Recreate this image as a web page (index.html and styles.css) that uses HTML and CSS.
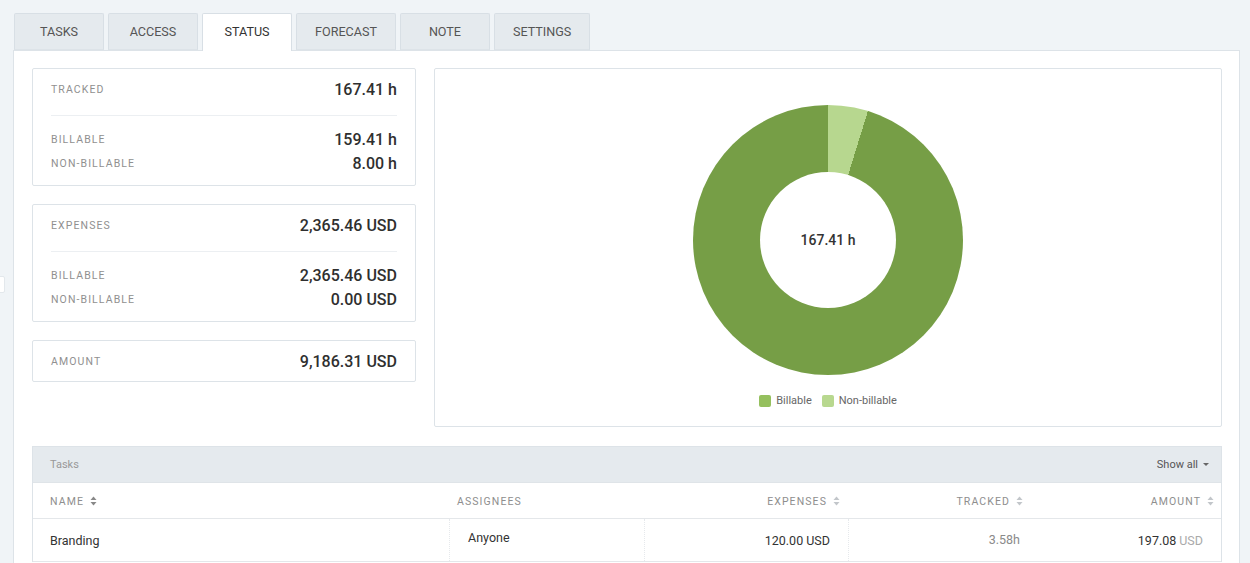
FILE: index.html
```html
<!DOCTYPE html>
<html>
<head>
<meta charset="utf-8">
<link rel="stylesheet" href="styles.css">
</head>
<body>
<div class="edge-tab"></div>
<nav class="tabs">
  <div class="tab">TASKS</div>
  <div class="tab">ACCESS</div>
  <div class="tab active">STATUS</div>
  <div class="tab">FORECAST</div>
  <div class="tab">NOTE</div>
  <div class="tab">SETTINGS</div>
</nav>
<main class="panel">
  <section class="top">
    <div class="stats">
      <div class="card">
        <div class="row head"><span class="label">TRACKED</span><span class="value">167.41 h</span></div>
        <div class="divider"></div>
        <div class="row"><span class="label">BILLABLE</span><span class="value">159.41 h</span></div>
        <div class="row"><span class="label">NON-BILLABLE</span><span class="value">8.00 h</span></div>
      </div>
      <div class="card">
        <div class="row head"><span class="label">EXPENSES</span><span class="value">2,365.46 USD</span></div>
        <div class="divider"></div>
        <div class="row"><span class="label">BILLABLE</span><span class="value">2,365.46 USD</span></div>
        <div class="row"><span class="label">NON-BILLABLE</span><span class="value">0.00 USD</span></div>
      </div>
      <div class="card single">
        <div class="row head"><span class="label">AMOUNT</span><span class="value">9,186.31 USD</span></div>
      </div>
    </div>
    <div class="chart-card">
      <div class="donut" style="background: conic-gradient(#b7d78f 0deg 17.2deg, #769e46 17.2deg 360deg);">
        <div class="donut-hole">167.41 h</div>
      </div>
      <div class="legend">
        <span class="legend-item"><span class="sw sw-bill"></span>Billable</span>
        <span class="legend-item"><span class="sw sw-non"></span>Non-billable</span>
      </div>
    </div>
  </section>

  <section class="table">
    <div class="table-bar">
      <span class="bar-title">Tasks</span>
      <span class="show-all">Show all <span class="caret"></span></span>
    </div>
    <div class="grid thead">
      <div class="th c-name">NAME <svg class="sort dark" viewBox="0 0 7 10" width="7" height="10"><path d="M3.5 0.5L6.5 4H0.5Z"/><path d="M3.5 9.5L6.5 6H0.5Z"/></svg></div>
      <div class="th c-assign">ASSIGNEES</div>
      <div class="th c-exp">EXPENSES <svg class="sort" viewBox="0 0 7 10" width="7" height="10"><path d="M3.5 0.5L6.5 4H0.5Z"/><path d="M3.5 9.5L6.5 6H0.5Z"/></svg></div>
      <div class="th c-track">TRACKED <svg class="sort" viewBox="0 0 7 10" width="7" height="10"><path d="M3.5 0.5L6.5 4H0.5Z"/><path d="M3.5 9.5L6.5 6H0.5Z"/></svg></div>
      <div class="th c-amt">AMOUNT <svg class="sort" viewBox="0 0 7 10" width="7" height="10"><path d="M3.5 0.5L6.5 4H0.5Z"/><path d="M3.5 9.5L6.5 6H0.5Z"/></svg></div>
    </div>
    <div class="grid trow">
      <div class="td c-name">Branding</div>
      <div class="td c-assign sep">Anyone</div>
      <div class="td c-exp sep">120.00 USD</div>
      <div class="td c-track sep muted">3.58h</div>
      <div class="td c-amt">197.08 <span class="unit">USD</span></div>
    </div>
  </section>
</main>
</body>
</html>
```

FILE: styles.css
```css
* { box-sizing: border-box; }
body {
  margin: 0;
  padding: 13px 10px 0 13px;
  height: 100vh;
  display: flex;
  flex-direction: column;
  background: #f0f4f7;
  font-family: Roboto, "Liberation Sans", Arial, sans-serif;
  color: #333;
  overflow: hidden;
}
.edge-tab {
  position: absolute;
  left: -2px;
  top: 276px;
  width: 7px;
  height: 17px;
  background: #fff;
  border: 1px solid #e3e8ec;
  border-radius: 2px;
}
.tabs {
  display: flex;
  gap: 4px;
  height: 37px;
  flex: none;
  padding-left: 1px;
}
.tab {
  min-width: 90px;
  padding: 0 18px;
  height: 37px;
  display: flex;
  align-items: center;
  justify-content: center;
  background: #e5eaee;
  border: 1px solid #d8dfe5;
  border-bottom: 1px solid #dde3e8;
  border-radius: 2px 2px 0 0;
  font-size: 12.6px;
  color: #555;
  position: relative;
  z-index: 1;
}
.tab.active {
  background: #fff;
  color: #333;
  height: 38px;
  border-bottom: none;
  padding-bottom: 2px;
}
.panel {
  flex: 1;
  min-height: 0;
  overflow: hidden;
  background: #fff;
  border: 1px solid #dde3e8;
  border-bottom: none;
  padding: 17px 17px 0 18px;
}

.top {
  display: grid;
  grid-template-columns: 384px 1fr;
  gap: 18px;
  align-items: start;
}
.stats {
  display: flex;
  flex-direction: column;
  gap: 18px;
}
.card {
  border: 1px solid #dde3e8;
  border-radius: 2px;
  padding: 9px 18px 10px;
}
.card.single { padding-bottom: 9px; }
.row {
  display: flex;
  justify-content: space-between;
  align-items: center;
  height: 24px;
}
.row.head { height: 22px; }
.divider {
  height: 1px;
  background: #eceff2;
  margin: 15px 0 11px;
}
.label {
  font-size: 10.5px;
  letter-spacing: 1.1px;
  color: #909090;
}
.value {
  font-size: 16px;
  font-weight: 500;
  color: #2f2f2f;
}

.chart-card {
  border: 1px solid #dde3e8;
  border-radius: 2px;
  padding: 36px 0 19px;
  display: flex;
  flex-direction: column;
  align-items: center;
}
.donut {
  width: 270px;
  height: 270px;
  border-radius: 50%;
  display: flex;
  align-items: center;
  justify-content: center;
}
.donut-hole {
  width: 136px;
  height: 136px;
  border-radius: 50%;
  background: #fff;
  display: flex;
  align-items: center;
  justify-content: center;
  font-size: 14px;
  font-weight: 500;
  color: #333;
}
.legend {
  margin-top: 20px;
  height: 12px;
  display: flex;
  gap: 10px;
  font-size: 11px;
  color: #666;
  line-height: 12px;
}
.legend-item { display: flex; align-items: center; gap: 5px; }
.sw { width: 12px; height: 12px; border-radius: 2px; display: inline-block; }
.sw-bill { background: #95c05e; }
.sw-non { background: #b8d88f; }

.table {
  margin-top: 19px;
  border: 1px solid #dde3e8;
  border-bottom: none;
}
.table-bar {
  height: 35px;
  background: #e5eaee;
  display: flex;
  align-items: center;
  justify-content: space-between;
  padding: 0 12px 0 17px;
  font-size: 11px;
}
.bar-title { color: #999; }
.show-all { color: #555; display: flex; align-items: center; gap: 5px; }
.caret {
  width: 0; height: 0;
  border-left: 3px solid transparent;
  border-right: 3px solid transparent;
  border-top: 3px solid #666;
}
.grid {
  display: grid;
  grid-template-columns: 416px 195px 204px 183px 1fr;
}
.thead {
  height: 37px;
  border-top: 1px solid #dfe4e8;
  border-bottom: 1px solid #e4e7ea;
  padding-top: 1px;
}
.th {
  display: flex;
  align-items: center;
  gap: 6px;
  font-size: 10.5px;
  letter-spacing: 1.1px;
  color: #8e8e8e;
}
.sort { fill: #c2c6ca; }
.sort.dark { fill: #888; }
.th.c-name { padding-left: 17px; }
.th.c-assign { padding-left: 8px; }
.th.c-exp { justify-content: flex-end; padding-right: 8px; }
.th.c-track { justify-content: flex-end; padding-right: 8px; }
.th.c-amt { justify-content: flex-end; padding-right: 7px; }

.trow {
  height: 43px;
  border-bottom: 1px solid #e4e7ea;
}
.td {
  display: flex;
  align-items: center;
  font-size: 12.5px;
  color: #333;
  padding-top: 1px;
}
.td.sep { border-left: 1px dotted #e6e9ec; }
.td.c-name { padding-left: 17px; }
.td.c-assign { padding-left: 18px; padding-top: 0; padding-bottom: 5px; }
.td.c-exp { justify-content: flex-end; padding-right: 18px; }
.td.c-track { justify-content: flex-end; padding-right: 11px; padding-bottom: 3px; }
.td.c-amt { justify-content: flex-end; padding-right: 18px; }
.muted { color: #8a8a8a; }
.unit { color: #aaa; margin-left: 3px; }
```
